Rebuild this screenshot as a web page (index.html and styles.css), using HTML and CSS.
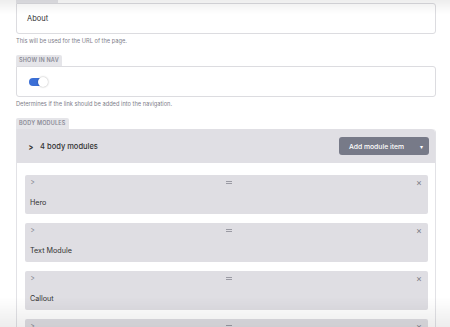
FILE: index.html
```html
<!DOCTYPE html>
<html lang="en">

<head>
    <meta charset="UTF-8">
    <meta name="viewport" content="width=device-width, initial-scale=1.0">
    <title>Edit page</title>
    <link rel="stylesheet" href="styles.css">
</head>

<body>
    <div class="page">
        <div class="field">
            <div class="tab tab-cut"></div>
            <div class="input">About</div>
            <div class="help">This will be used for the URL of the page.</div>
        </div>

        <div class="field">
            <div class="tab">Show in nav</div>
            <div class="input">
                <span class="toggle"><span class="knob"></span></span>
            </div>
            <div class="help">Determines if the link should be added into the navigation.</div>
        </div>

        <div class="field">
            <div class="tab">Body modules</div>
            <div class="modules">
                <div class="modules-head">
                    <span class="chevron">&gt;</span>
                    <span class="count">4 body modules</span>
                    <button class="add-btn">Add module item <span class="caret">&#9662;</span></button>
                </div>
                <div class="modules-body">
                    <div class="item">
                        <div class="item-bar">
                            <span class="item-open">&gt;</span>
                            <span class="handle"></span>
                            <span class="remove">&times;</span>
                        </div>
                        <div class="item-name">Hero</div>
                    </div>
                    <div class="item">
                        <div class="item-bar">
                            <span class="item-open">&gt;</span>
                            <span class="handle"></span>
                            <span class="remove">&times;</span>
                        </div>
                        <div class="item-name">Text Module</div>
                    </div>
                    <div class="item">
                        <div class="item-bar">
                            <span class="item-open">&gt;</span>
                            <span class="handle"></span>
                            <span class="remove">&times;</span>
                        </div>
                        <div class="item-name">Callout</div>
                    </div>
                    <div class="item">
                        <div class="item-bar">
                            <span class="item-open">&gt;</span>
                            <span class="handle"></span>
                            <span class="remove">&times;</span>
                        </div>
                    </div>
                </div>
            </div>
        </div>
    </div>
    <div class="fade-top"></div>
    <div class="fade-bottom"></div>
</body>

</html>
```

FILE: styles.css
```css
body {
    margin: 0;
    background-color: #fff;
    font-family: Inter, "Noto Sans", sans-serif;
    color: #333;
    height: 327px;
    overflow: hidden;
}

.page {
    margin-top: -8px;
    padding-left: 16px;
    width: 420px;
}

.field {
    margin-bottom: 10px;
}

.tab {
    width: fit-content;
    height: 11px;
    line-height: 11px;
    padding: 0 3px;
    background-color: #e5e5e9;
    color: #8b8b96;
    font-size: 5.5px;
    font-weight: 600;
    text-transform: uppercase;
    letter-spacing: 0.2px;
    border-radius: 2px 2px 0 0;
}

.tab-cut {
    width: 36px;
}

.input {
    height: 29px;
    border: 1px solid #dcdce0;
    border-radius: 0 3px 3px 3px;
    padding-left: 10px;
    display: flex;
    align-items: center;
    font-size: 7.5px;
}

.help {
    margin-top: 3px;
    line-height: 8px;
    font-size: 5.7px;
    color: #80808a;
}

.toggle {
    position: relative;
    display: inline-block;
    width: 14px;
    height: 8px;
    margin-left: 2px;
    border-radius: 4px;
    background-color: #3b6fd6;
}

.knob {
    position: absolute;
    left: 9px;
    top: -1px;
    width: 10px;
    height: 10px;
    border-radius: 50%;
    background-color: #fff;
    box-shadow: 0 0 2px rgba(0, 0, 0, 0.35);
}

.modules {
    border: 1px solid #e2e2e6;
    border-top: none;
    border-radius: 0 4px 0 0;
}

.modules-head {
    height: 34px;
    background-color: #e0dfe4;
    display: flex;
    align-items: center;
    padding: 0 6px 0 11px;
    border-radius: 0 4px 0 0;
}

.chevron {
    font-size: 9px;
    font-weight: 700;
    color: #333;
    transform: scaleX(0.8);
}

.count {
    margin-left: 6px;
    font-size: 7.5px;
    font-weight: 500;
    color: #333;
}

.add-btn {
    margin-left: auto;
    height: 18px;
    width: 90px;
    border: none;
    border-radius: 3px;
    background-color: #777a88;
    color: #fff;
    font-family: inherit;
    font-size: 6.8px;
    font-weight: 500;
    display: flex;
    align-items: center;
    padding: 0 6px 0 10px;
}

.caret {
    margin-left: auto;
    font-size: 6px;
}

.modules-body {
    padding: 12px 7px 0 8px;
    display: flex;
    flex-direction: column;
    gap: 9px;
}

.item {
    height: 39px;
    flex-shrink: 0;
    background-color: #dfdee3;
    border-radius: 2px;
    padding: 0 6px 0 5px;
}

.item-bar {
    height: 14px;
    display: flex;
    align-items: center;
    justify-content: space-between;
    color: #7e7e88;
}

.item-open {
    font-size: 8px;
    transform: scaleX(0.8);
}

.handle {
    width: 6px;
    height: 3px;
    border-top: 1px solid #9a9aa3;
    border-bottom: 1px solid #9a9aa3;
    box-sizing: border-box;
    margin-left: 6px;
}

.remove {
    font-size: 9px;
    line-height: 9px;
}

.item-name {
    margin-top: 9px;
    font-size: 7.2px;
    color: #333;
}

.fade-top {
    position: fixed;
    top: 0;
    left: 0;
    right: 0;
    height: 14px;
    background: linear-gradient(rgba(0, 0, 0, 0.07), rgba(0, 0, 0, 0));
}

.fade-bottom {
    position: fixed;
    bottom: 0;
    left: 0;
    right: 0;
    height: 30px;
    background: linear-gradient(rgba(0, 0, 0, 0), rgba(0, 0, 0, 0.07));
}
```
